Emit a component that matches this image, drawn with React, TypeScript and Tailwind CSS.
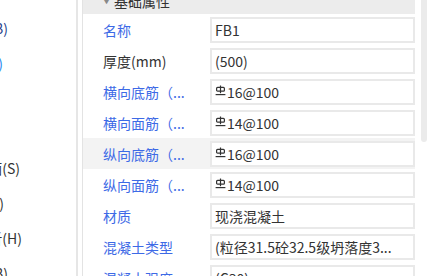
import React from 'react';

type Row = {
    label: string;
    value: string;
    blue: boolean;
    rebar?: boolean;
    active?: boolean;
};

const rows: Row[] = [
    { label: '名称', value: 'FB1', blue: true },
    { label: '厚度(mm)', value: '(500)', blue: false },
    { label: '横向底筋（...', value: '16@100', blue: true, rebar: true },
    { label: '横向面筋（...', value: '14@100', blue: true, rebar: true },
    { label: '纵向底筋（...', value: '16@100', blue: true, rebar: true, active: true },
    { label: '纵向面筋（...', value: '14@100', blue: true, rebar: true },
    { label: '材质', value: '现浇混凝土', blue: true },
    { label: '混凝土类型', value: '(粒径31.5砼32.5级坍落度3...', blue: true },
    { label: '混凝土强度', value: '(C30)', blue: true },
];

// HRB400 rebar mark
const RebarIcon = () => (
    <svg width="11" height="11" viewBox="0 0 11 11" fill="none" stroke="currentColor" strokeWidth="1.2" className="mr-[1px] -mt-[3px] shrink-0">
        <path d="M5.5 0.5V8.2" />
        <rect x="1.6" y="2.4" width="7.8" height="3.8" rx="1" />
        <path d="M0.6 9.6H10.4" />
    </svg>
);

const App: React.FC = () => {
    return (
        <div className="w-[427px] h-[276px] overflow-hidden bg-white flex font-['Noto_Sans_CJK_SC','Noto_Sans',sans-serif] text-[14px] leading-none">
            {/* left menu, scrolled sideways */}
            <div className="w-[76px] shrink-0 overflow-hidden pt-[10px] flex flex-col text-[#333]">
                <div className="h-[35px] shrink-0 flex items-center"><div className="w-[8px] flex justify-end whitespace-nowrap text-[#1f3f8c]">显示(B)</div></div>
                <div className="h-[35px] shrink-0 flex items-center"><div className="w-[3px] flex justify-end whitespace-nowrap text-[#1e88f0]">构件)</div></div>
                <div className="h-[35px] shrink-0" />
                <div className="h-[35px] shrink-0" />
                <div className="h-[35px] shrink-0 flex items-center"><div className="w-[20px] flex justify-end whitespace-nowrap">截面(S)</div></div>
                <div className="h-[35px] shrink-0 flex items-center"><div className="w-[4px] flex justify-end whitespace-nowrap">布置)</div></div>
                <div className="h-[35px] shrink-0 flex items-center"><div className="w-[22px] flex justify-end whitespace-nowrap">分析(H)</div></div>
                <div className="h-[35px] shrink-0 flex items-center"><div className="w-[8px] flex justify-end whitespace-nowrap">显示(B)</div></div>
            </div>
            <div className="w-[2px] shrink-0 bg-[#e6e6e6]" />
            <div className="w-[4px] shrink-0" />
            <div className="w-[1px] shrink-0 bg-[#e3e3e3]" />

            {/* property panel */}
            <div className="w-[332px] shrink-0 flex flex-col">
                <div className="h-[14px] shrink-0 bg-[#ececec] overflow-hidden flex items-end pl-[19px] text-[#333]">
                    <span className="text-[9px] text-[#888] mb-[9px] mr-[3px]">▼</span>
                    <span className="mb-[6px] whitespace-nowrap">基础属性</span>
                </div>
                {rows.map((r, i) => (
                    <div key={i} className={`h-[31px] shrink-0 flex items-center ${r.active ? 'bg-[#f3f3f3]' : ''}`}>
                        <div className={`w-[127px] shrink-0 pl-[20px] whitespace-nowrap ${r.blue ? 'text-[#3d6ae6]' : 'text-[#333]'}`}>
                            {r.label}
                        </div>
                        <div className="flex-1 h-[26px] border-2 border-[#e9e9e9] bg-white flex items-center pl-[3px] text-[#333] whitespace-nowrap overflow-hidden">
                            {r.rebar && <RebarIcon />}
                            <span>{r.value}</span>
                        </div>
                    </div>
                ))}
            </div>

            <div className="w-[6px] shrink-0" />
            {/* scrollbar */}
            <div className="w-[6px] shrink-0">
                <div className="h-[142px] bg-[#ebebeb] rounded-b-[3px]" />
            </div>
        </div>
    );
};

export default App;
